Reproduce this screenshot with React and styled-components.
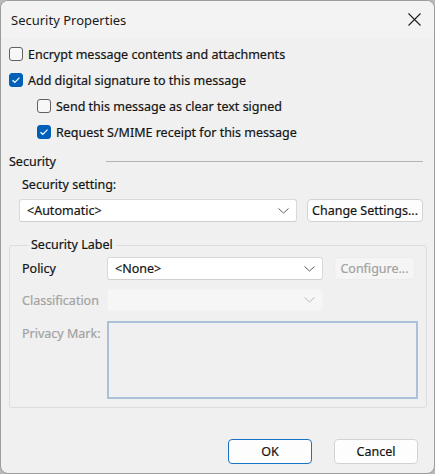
import React from 'react';
import styled, { createGlobalStyle } from 'styled-components';

const GlobalStyle = createGlobalStyle`
  html, body {
    margin: 0;
    padding: 0;
    background: #b9b9b9;
  }
  * {
    box-sizing: border-box;
  }
`;

const Window = styled.div`
  width: 435px;
  height: 474px;
  border: 1px solid #9c9c9c;
  border-radius: 8px;
  background: #f0f0f0;
  overflow: hidden;
  font-family: 'Noto Sans', 'Segoe UI', sans-serif;
  font-size: 12.5px;
  color: #141414;
  -webkit-text-stroke: 0.2px;
  display: flex;
  flex-direction: column;
`;

const TitleBar = styled.div`
  height: 37px;
  display: flex;
  align-items: center;
  justify-content: space-between;
  padding: 0 12px 0 10px;
  background: #f3f3f3;
`;

const Title = styled.div`
  font-size: 13px;
  color: #1a1a1a;
  -webkit-text-stroke: 0;
`;

const CloseButton = styled.div`
  width: 14px;
  height: 14px;
  display: flex;
  align-items: center;
  justify-content: center;
  margin-right: 1px;
`;

const Body = styled.div`
  flex: 1;
  display: flex;
  flex-direction: column;
  padding: 3px 11px 0 8px;
`;

const CheckRow = styled.label`
  height: 26px;
  display: flex;
  align-items: center;
  gap: 5px;
  padding-left: ${({ indent }) => (indent ? '28px' : '0')};
`;

const Box = styled.span`
  width: 14px;
  height: 14px;
  border-radius: 3px;
  border: 1px solid ${({ checked }) => (checked ? '#005fb8' : '#616161')};
  background: ${({ checked }) => (checked ? '#005fb8' : '#f7f7f7')};
  display: flex;
  align-items: center;
  justify-content: center;
  flex-shrink: 0;
`;

const SectionHeader = styled.div`
  height: 22px;
  margin-top: 5px;
  display: flex;
  align-items: center;
`;

const SectionTitle = styled.div`
  width: 97px;
`;

const Rule = styled.div`
  flex: 1;
  height: 1px;
  background: #b4b4b4;
`;

const FieldLabel = styled.div`
  height: 20px;
  display: flex;
  align-items: center;
  margin-left: 13px;
  margin-top: 2px;
`;

const ComboRow = styled.div`
  display: flex;
  gap: 10px;
  margin-top: 5px;
  padding-left: 10px;
`;

const Combo = styled.div`
  width: ${({ w }) => w}px;
  height: ${({ h }) => h || 23}px;
  display: flex;
  align-items: center;
  justify-content: space-between;
  padding: 0 7px 0 7px;
  background: ${({ disabled }) => (disabled ? '#f6f6f6' : '#ffffff')};
  border: 1px solid ${({ disabled }) => (disabled ? '#f3f3f3' : '#d9d9d9')};
  border-bottom-color: ${({ disabled }) => (disabled ? '#f3f3f3' : '#cfcfcf')};
  border-radius: 3px;
`;

const Button = styled.div`
  width: ${({ w }) => w}px;
  height: ${({ h }) => h || 23}px;
  display: flex;
  align-items: center;
  justify-content: center;
  border-radius: 4px;
  background: ${({ disabled }) => (disabled ? '#f5f5f5' : '#fdfdfd')};
  border: ${({ primary, disabled }) =>
    primary ? '1.5px solid #1a73c7' : disabled ? '1px solid #ececec' : '1px solid #d3d3d3'};
  color: ${({ disabled }) => (disabled ? '#a2a2a2' : '#141414')};
`;

const Group = styled.fieldset`
  margin: 15px 0 0 0;
  padding: 4px 0 8px 12px;
  width: 418px;
  height: 171px;
  border: 1px solid #dcdcdc;
  border-radius: 3px;
`;

const Legend = styled.legend`
  margin-left: 6px;
  padding: 0 3px;
  line-height: 16px;
`;

const GroupGrid = styled.div`
  display: grid;
  grid-template-columns: 85px auto;
  row-gap: 9px;
  align-items: start;
`;

const GroupLabel = styled.div`
  height: 23px;
  display: flex;
  align-items: center;
  color: ${({ disabled }) => (disabled ? '#a2a2a2' : '#141414')};
  padding-top: ${({ top }) => (top ? '2px' : '0')};
  align-self: ${({ top }) => (top ? 'start' : 'center')};
`;

const PolicyCell = styled.div`
  display: flex;
  gap: 11px;
  align-items: center;
`;

const TextArea = styled.div`
  width: 311px;
  height: 78px;
  border: 2px solid #adc0d9;
  background: #f0f0f0;
`;

const Footer = styled.div`
  margin-top: auto;
  display: flex;
  justify-content: flex-end;
  gap: 22px;
  padding: 0 5px 9px 0;
`;

const Check = () => (
  <svg width="10" height="8" viewBox="0 0 10 8">
    <polyline points="1.5,4.2 3.8,6.3 8.5,1.6" fill="none" stroke="#ffffff" strokeWidth="1.2" />
  </svg>
);

const Chevron = ({ light }) => (
  <svg width="11" height="6" viewBox="0 0 11 6">
    <polyline points="0.5,0.5 5.5,5 10.5,0.5" fill="none" stroke={light ? '#b8b8b8' : '#5e5e5e'} strokeWidth="1" />
  </svg>
);

function CheckBox({ checked, indent, children }) {
  return (
    <CheckRow indent={indent}>
      <Box checked={checked}>{checked && <Check />}</Box>
      {children}
    </CheckRow>
  );
}

export default function App() {
  return (
    <>
      <GlobalStyle />
      <Window>
        <TitleBar>
          <Title>Security Properties</Title>
          <CloseButton>
            <svg width="13" height="13" viewBox="0 0 13 13">
              <path d="M0.5 0.5 L12.5 12.5 M12.5 0.5 L0.5 12.5" stroke="#1f1f1f" strokeWidth="1.1" />
            </svg>
          </CloseButton>
        </TitleBar>
        <Body>
          <CheckBox>Encrypt message contents and attachments</CheckBox>
          <CheckBox checked>Add digital signature to this message</CheckBox>
          <CheckBox indent>Send this message as clear text signed</CheckBox>
          <CheckBox indent checked>Request S/MIME receipt for this message</CheckBox>

          <SectionHeader>
            <SectionTitle>Security</SectionTitle>
            <Rule />
          </SectionHeader>
          <FieldLabel>Security setting:</FieldLabel>
          <ComboRow>
            <Combo w={278}>
              <span>&lt;Automatic&gt;</span>
              <Chevron />
            </Combo>
            <Button w={116}>Change Settings...</Button>
          </ComboRow>

          <Group>
            <Legend>Security Label</Legend>
            <GroupGrid>
              <GroupLabel>Policy</GroupLabel>
              <PolicyCell>
                <Combo w={216}>
                  <span>&lt;None&gt;</span>
                  <Chevron />
                </Combo>
                <Button w={81} disabled>Configure...</Button>
              </PolicyCell>
              <GroupLabel disabled>Classification</GroupLabel>
              <Combo w={216} h={22} disabled>
                <span />
                <Chevron light />
              </Combo>
              <GroupLabel disabled top>Privacy Mark:</GroupLabel>
              <TextArea />
            </GroupGrid>
          </Group>

          <Footer>
            <Button w={84} h={25} primary>OK</Button>
            <Button w={84} h={25}>Cancel</Button>
          </Footer>
        </Body>
      </Window>
    </>
  );
}
